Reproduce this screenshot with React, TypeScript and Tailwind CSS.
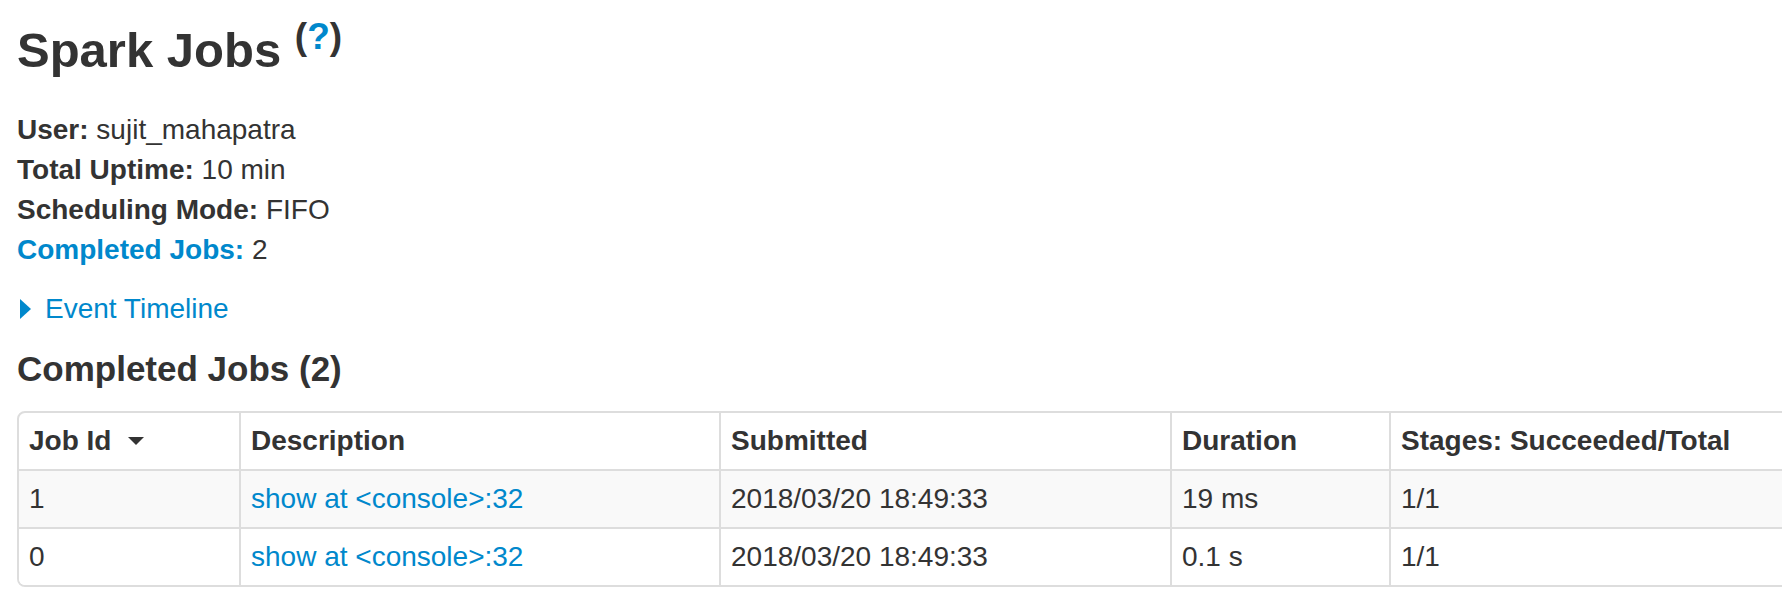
import React from "react";

interface Job {
  id: string;
  description: string;
  submitted: string;
  duration: string;
  stages: string;
}

const jobs: Job[] = [
  { id: "1", description: "show at <console>:32", submitted: "2018/03/20 18:49:33", duration: "19 ms", stages: "1/1" },
  { id: "0", description: "show at <console>:32", submitted: "2018/03/20 18:49:33", duration: "0.1 s", stages: "1/1" },
];

const cols = "grid grid-cols-[220px_480px_451px_219px_600px]";

export default function App() {
  return (
    <div className="w-full overflow-hidden bg-white text-[#333] font-['Liberation_Sans',Arial,sans-serif]">
      <div className="pl-[17px]">
        {/* page title */}
        <h3 className="mt-[10px] text-[49px] leading-[80px] font-bold">
          Spark Jobs{" "}
          <sup className="text-[37px]">
            (<span className="text-[#0088cc]">?</span>)
          </sup>
        </h3>

        {/* summary */}
        <ul className="mt-[20px] text-[28px] leading-[40px]">
          <li>
            <strong>User:</strong> sujit_mahapatra
          </li>
          <li>
            <strong>Total Uptime:</strong> 10 min
          </li>
          <li>
            <strong>Scheduling Mode:</strong> FIFO
          </li>
          <li>
            <a className="font-bold text-[#0088cc]" href="#completed">
              Completed Jobs:
            </a>{" "}
            2
          </li>
        </ul>

        <div className="mt-[19px] flex items-center text-[28px] leading-[40px] text-[#0088cc]">
          <span className="ml-[3px] w-0 h-0 border-y-[10px] border-y-transparent border-l-[11px] border-l-[#0088cc]" />
          <span className="ml-[14px]">Event Timeline</span>
        </div>

        <h4 id="completed" className="mt-[20px] text-[35px] leading-[40px] font-bold">
          Completed Jobs (2)
        </h4>

        {/* jobs table */}
        <div className="mt-[22px] w-[1974px] border-2 border-[#ddd] rounded-[8px] text-[28px] leading-[40px]">
          <div className={`${cols} font-bold`}>
            <div className="px-[10px] py-[8px] flex items-center">
              Job Id
              <span className="ml-[17px] w-0 h-0 border-x-[8px] border-x-transparent border-t-[8px] border-t-[#333]" />
            </div>
            <div className="px-[10px] py-[8px] border-l-2 border-[#ddd]">Description</div>
            <div className="px-[10px] py-[8px] border-l-2 border-[#ddd]">Submitted</div>
            <div className="px-[10px] py-[8px] border-l-2 border-[#ddd]">Duration</div>
            <div className="px-[10px] py-[8px] border-l-2 border-[#ddd]">Stages: Succeeded/Total</div>
          </div>
          {jobs.map((job, i) => (
            <div key={job.id} className={`${cols} border-t-2 border-[#ddd] ${i % 2 === 0 ? "bg-[#f9f9f9]" : "bg-white rounded-b-[6px]"}`}>
              <div className="px-[10px] py-[8px]">{job.id}</div>
              <div className="px-[10px] py-[8px] border-l-2 border-[#ddd]">
                <a className="text-[#0088cc]" href="#">
                  {job.description}
                </a>
              </div>
              <div className="px-[10px] py-[8px] border-l-2 border-[#ddd]">{job.submitted}</div>
              <div className="px-[10px] py-[8px] border-l-2 border-[#ddd]">{job.duration}</div>
              <div className="px-[10px] py-[8px] border-l-2 border-[#ddd]">{job.stages}</div>
            </div>
          ))}
        </div>
      </div>
    </div>
  );
}
